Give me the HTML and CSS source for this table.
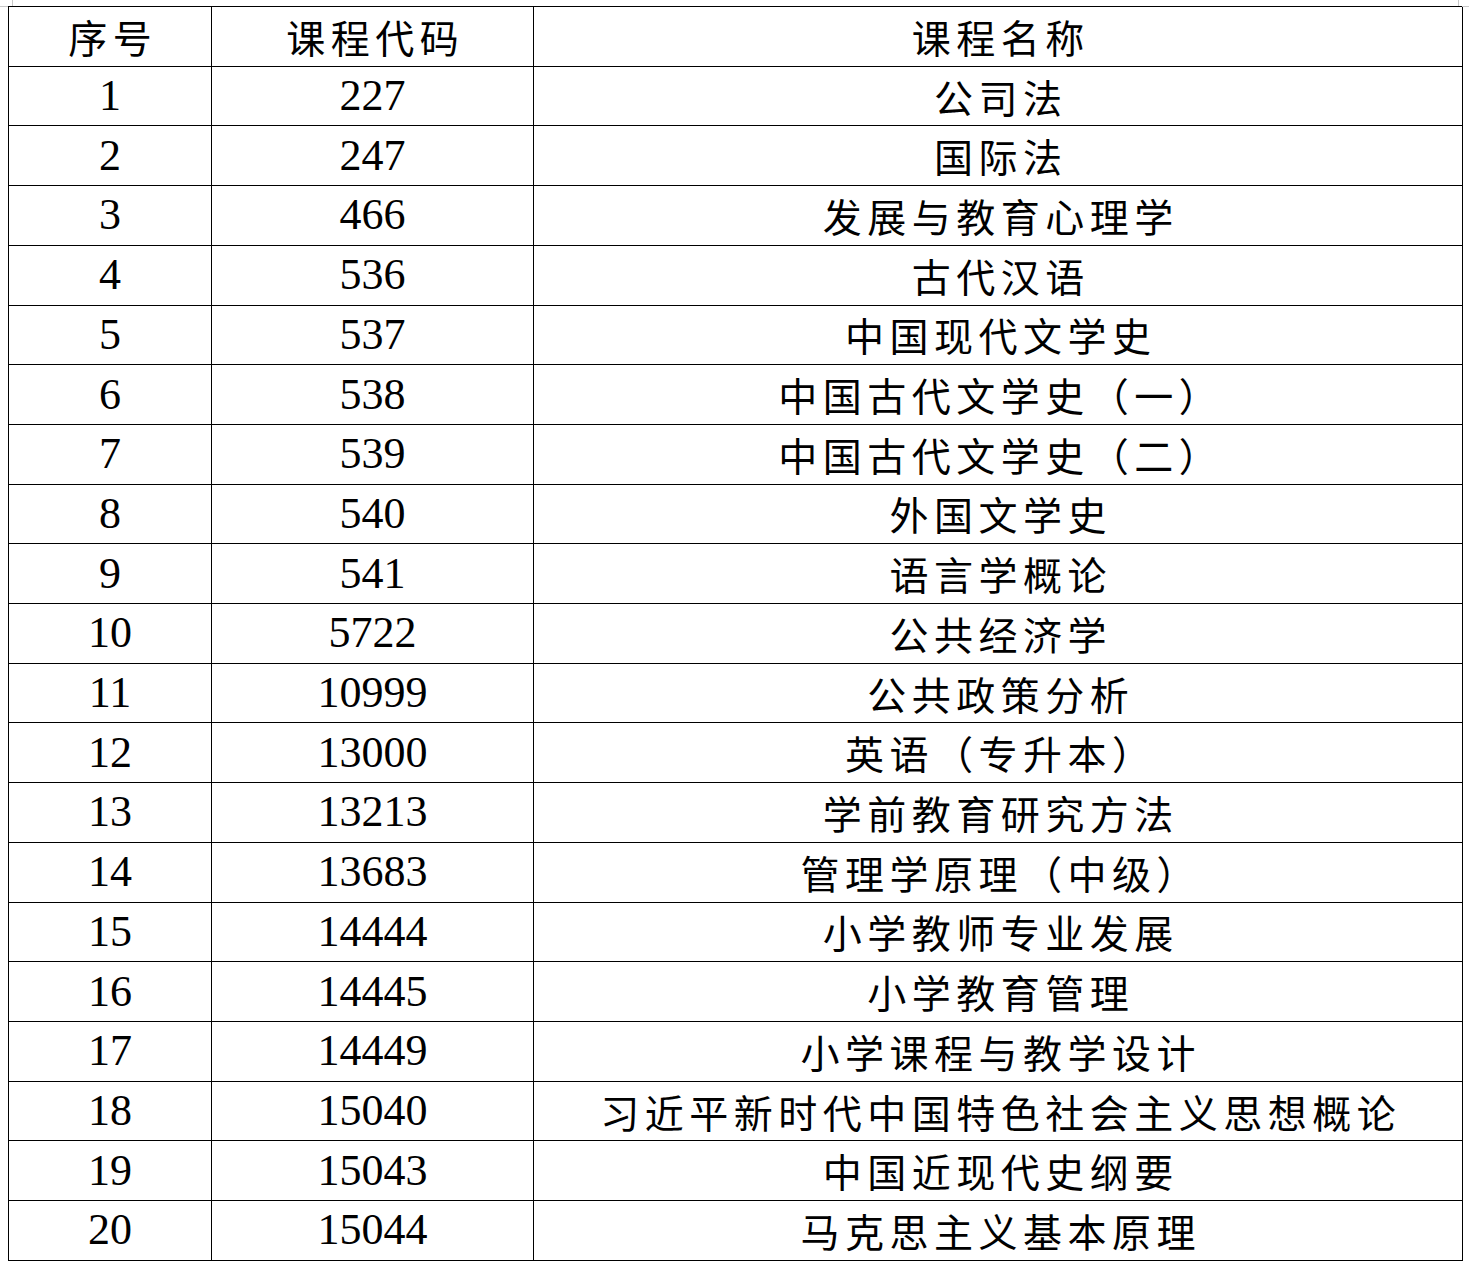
FILE: index.html
```html
<!DOCTYPE html>
<html lang="zh-CN">
<head>
<meta charset="utf-8">
<title>课程列表</title>
<link rel="stylesheet" href="styles.css">
</head>
<body>
<div class="page">
  <span class="mark mark-tl-v"></span>
  <span class="mark mark-tl-h"></span>
  <span class="mark mark-tr-v"></span>
  <span class="mark mark-tr-h"></span>
  <table class="courses">
    <colgroup>
      <col class="c-no">
      <col class="c-code">
      <col class="c-name">
    </colgroup>
    <thead>
      <tr><th class="cjk">序号</th><th class="cjk">课程代码</th><th class="cjk">课程名称</th></tr>
    </thead>
    <tbody>
      <tr><td class="num">1</td><td class="num">227</td><td class="cjk">公司法</td></tr>
      <tr><td class="num">2</td><td class="num">247</td><td class="cjk">国际法</td></tr>
      <tr><td class="num">3</td><td class="num">466</td><td class="cjk">发展与教育心理学</td></tr>
      <tr><td class="num">4</td><td class="num">536</td><td class="cjk">古代汉语</td></tr>
      <tr><td class="num">5</td><td class="num">537</td><td class="cjk">中国现代文学史</td></tr>
      <tr><td class="num">6</td><td class="num">538</td><td class="cjk">中国古代文学史（一）</td></tr>
      <tr><td class="num">7</td><td class="num">539</td><td class="cjk">中国古代文学史（二）</td></tr>
      <tr><td class="num">8</td><td class="num">540</td><td class="cjk">外国文学史</td></tr>
      <tr><td class="num">9</td><td class="num">541</td><td class="cjk">语言学概论</td></tr>
      <tr><td class="num">10</td><td class="num">5722</td><td class="cjk">公共经济学</td></tr>
      <tr><td class="num">11</td><td class="num">10999</td><td class="cjk">公共政策分析</td></tr>
      <tr><td class="num">12</td><td class="num">13000</td><td class="cjk">英语（专升本）</td></tr>
      <tr><td class="num">13</td><td class="num">13213</td><td class="cjk">学前教育研究方法</td></tr>
      <tr><td class="num">14</td><td class="num">13683</td><td class="cjk">管理学原理（中级）</td></tr>
      <tr><td class="num">15</td><td class="num">14444</td><td class="cjk">小学教师专业发展</td></tr>
      <tr><td class="num">16</td><td class="num">14445</td><td class="cjk">小学教育管理</td></tr>
      <tr><td class="num">17</td><td class="num">14449</td><td class="cjk">小学课程与教学设计</td></tr>
      <tr><td class="num">18</td><td class="num">15040</td><td class="cjk">习近平新时代中国特色社会主义思想概论</td></tr>
      <tr><td class="num">19</td><td class="num">15043</td><td class="cjk">中国近现代史纲要</td></tr>
      <tr><td class="num">20</td><td class="num">15044</td><td class="cjk">马克思主义基本原理</td></tr>
    </tbody>
  </table>
</div>
</body>
</html>
```
FILE: styles.css
```css
html, body {
  margin: 0;
  padding: 0;
  background: #ffffff;
}

.page {
  position: relative;
  padding: 6px 0 0 8px;
}

.mark {
  position: absolute;
  background: #c8c8c8;
}
.mark-tl-v { left: 12px; top: 0; width: 1px; height: 6px; }
.mark-tl-h { left: 0; top: 6px; width: 8px; height: 1px; }
.mark-tr-v { left: 1458px; top: 0; width: 1px; height: 6px; }
.mark-tr-h { left: 1462px; top: 6px; width: 7px; height: 1px; }

.courses {
  border-collapse: collapse;
  table-layout: fixed;
  width: 1454px;
  color: #000;
}

.c-no { width: 203px; }
.c-code { width: 322px; }
.c-name { width: 929px; }

.courses tr {
  height: 59.71px;
}

.courses th,
.courses td {
  border: 1px solid #000;
  padding: 0;
  text-align: center;
  vertical-align: middle;
  font-weight: normal;
  line-height: 1;
}

.cjk {
  font-family: "Noto Sans CJK SC", "Liberation Serif", sans-serif;
  font-size: 39px;
  letter-spacing: 5.5px;
  text-indent: 5.5px;
  font-weight: 300;
}

.num {
  font-family: "Liberation Serif", serif;
  font-size: 44px;
}
```
